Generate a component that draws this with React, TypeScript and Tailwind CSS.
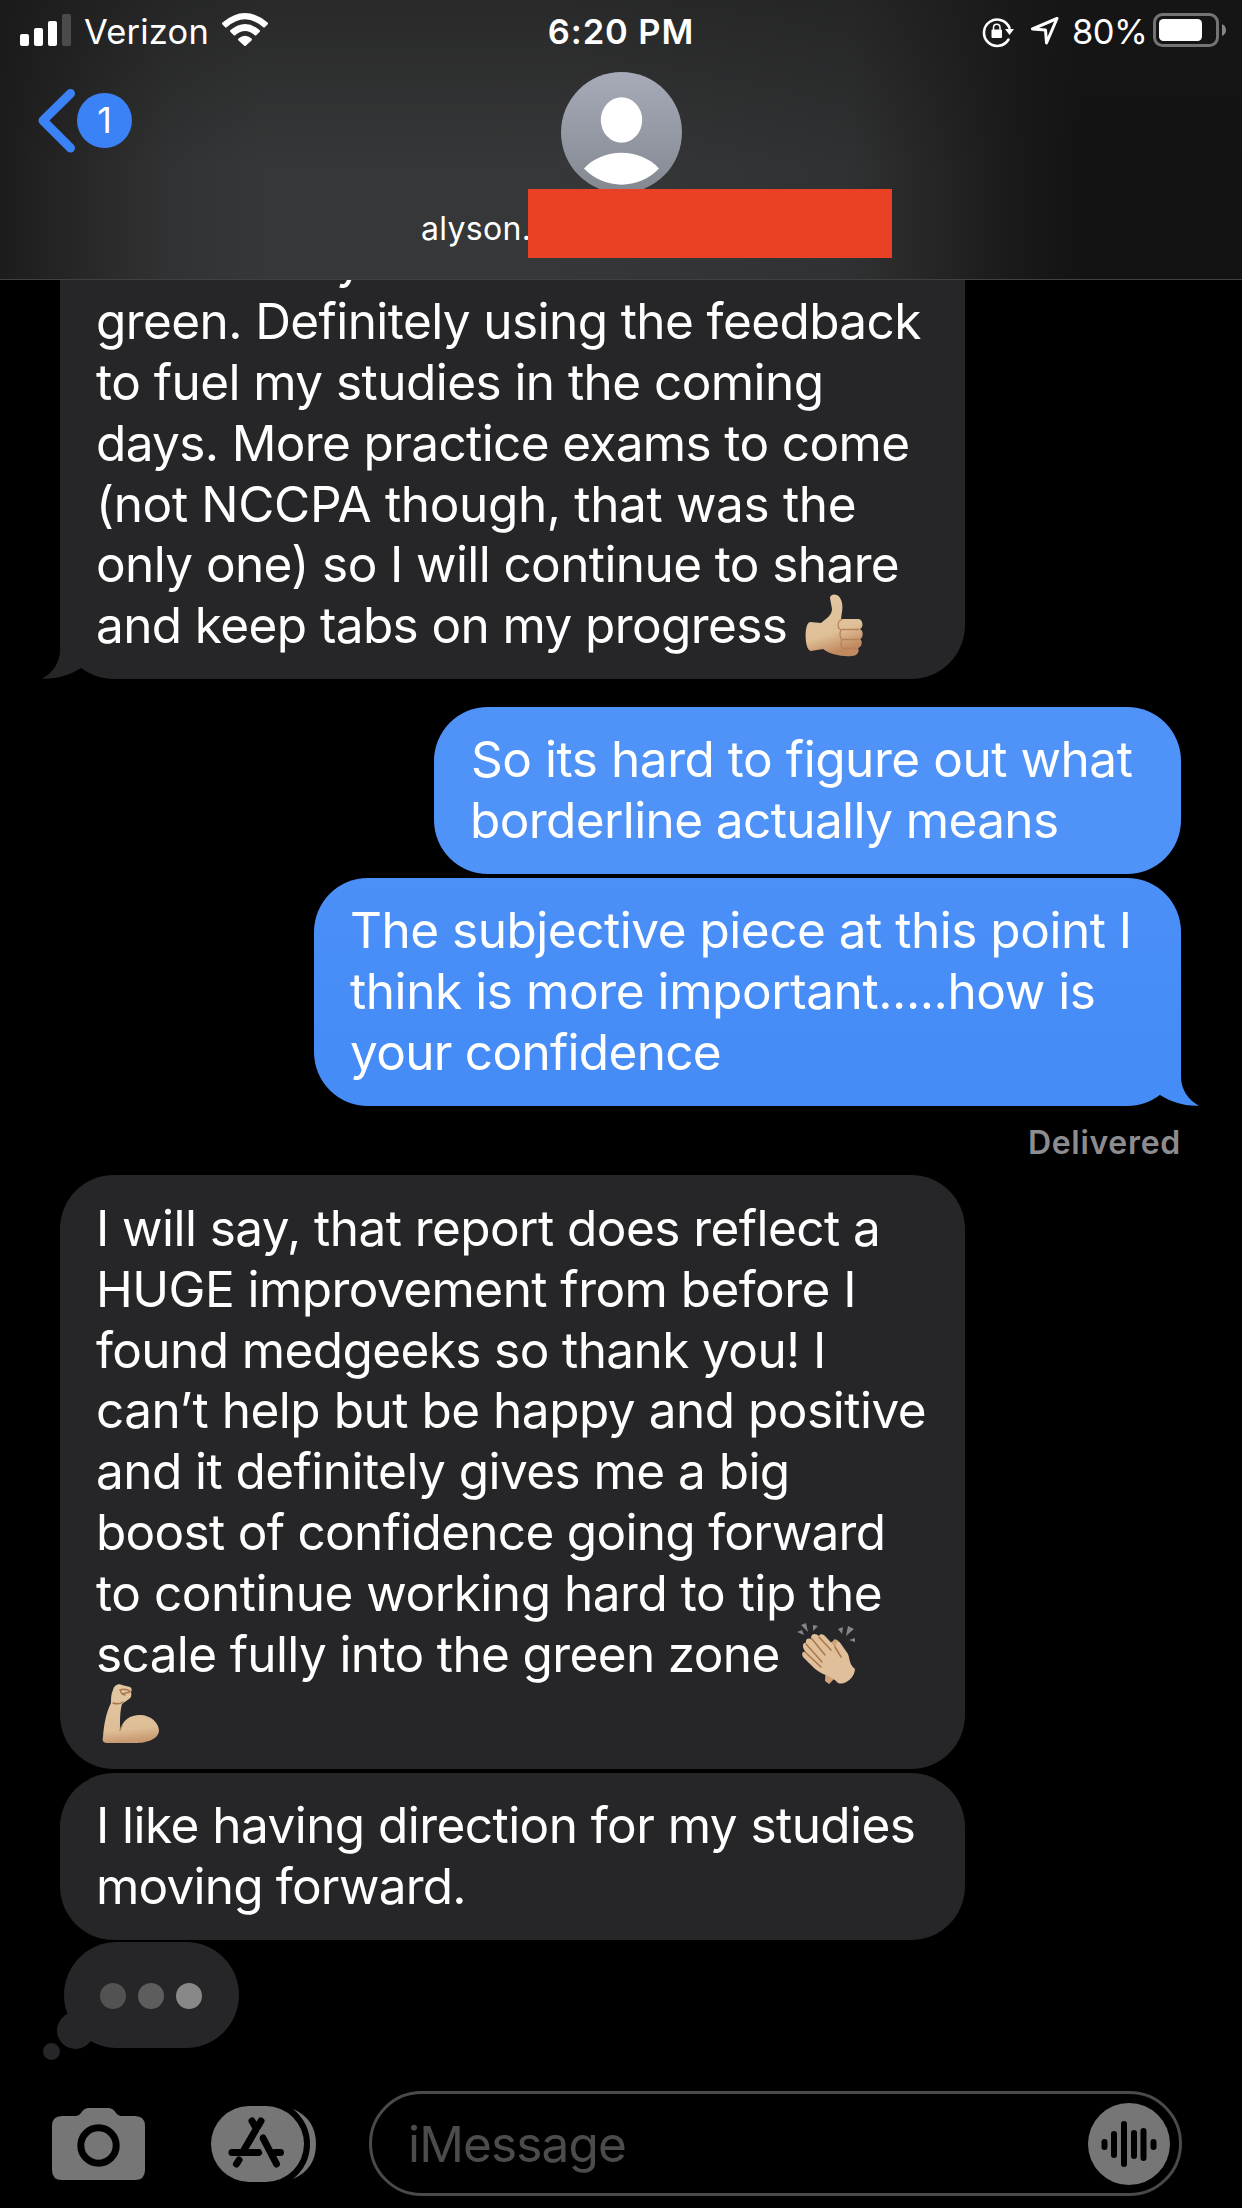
import { clsx } from 'clsx';
import type { ReactNode } from 'react';

interface BubbleProps {
  lines: ReactNode[];
  sent?: boolean;
  tail?: boolean;
  className?: string;
}

function Tail({ sent }: { sent?: boolean }) {
  return (
    <svg
      viewBox="0 0 60 60"
      className={clsx(
        'absolute bottom-0 h-[60px] w-[60px]',
        sent ? '-right-[18px] -scale-x-100 fill-[#468cf7]' : '-left-[18px] fill-[#262628]'
      )}
    >
      <path d="M18 0V31C18 43 11 54 0 59.7C14 60.5 28 56 39 49L60 20V0Z" />
    </svg>
  );
}

function Bubble({ lines, sent, tail, className }: BubbleProps) {
  return (
    <div
      className={clsx(
        'relative shrink-0 rounded-[54px] pt-[22.7px] pb-[22.7px] pl-9 text-[49.5px] leading-[60.9px] tracking-[-0.55px] whitespace-nowrap text-white',
        sent ? 'self-end' : 'w-[905px] self-start bg-[#262628]',
        className
      )}
    >
      {tail && <Tail sent={sent} />}
      {lines.map((line, i) => (
        <div key={i} className="relative h-[60.9px]">
          {line}
        </div>
      ))}
    </div>
  );
}

function ThumbsUp() {
  return (
    <svg viewBox="0 0 60 64" className="-my-2 ml-[18px] inline-block h-16 w-[60px] align-[-7px]">
      <defs>
        <linearGradient id="thumb" x1="0" y1="0" x2="0.3" y2="1">
          <stop offset="0" stopColor="#e3c9a2" />
          <stop offset="0.7" stopColor="#dfbf97" />
          <stop offset="1" stopColor="#c08a60" />
        </linearGradient>
      </defs>
      <path
        fill="url(#thumb)"
        d="M25 4C25 0 32-1 35 4C39 10 37 17 36 25L53 25C58 25 59 33 55 35C59 37 58 44 55 45C58 47 57 53 53 54C55 58 52 62 47 62C37 63 24 60 18 55L6 57C-1 56-1 29 5 28L16 29C22 24 27 21 27 15Z"
      />
      <path
        fill="none"
        stroke="#b98259"
        strokeWidth="1.3"
        strokeLinecap="round"
        d="M37 25.5C32 27 32 34 36 36C34 39 35 44 37 46C35 49 36 53 38 55M37 35.5H54M37 45.5H54M38 54.5H51"
      />
    </svg>
  );
}

function Clap() {
  return (
    <svg viewBox="0 0 60 62" className="-my-2 ml-[17px] inline-block h-[62px] w-[60px] align-[-4.5px]">
      <path
        fill="#858588"
        d="M4 2L9 0L11 9ZM0 9L5 7L7 12ZM16 2L21 3L16 8ZM41 6L46 4L45 11ZM49 13L51 3L57 6ZM52 17L58 15V19Z"
      />
      <path fill="#cfa27a" d="M30 22L36 18C38 14 42 18 44 22L51 33L52 41L39 54L32 61L28 58Z" />
      <path
        fill="#dfc09a"
        d="M9 20C8 15 13 14 17 18L14 15C14 10 19 10 22 13C23 10 27 11 29 14L39 25C38 20 41 16 44 21L51 31C53 36 52 41 58 46C58 54 48 63 41 60C37 56 34 54 29 52C21 50 15 43 6 34C4 30 6 28 9 29C4 24 6 19 9 20Z"
      />
      <path
        fill="none"
        stroke="#ad7850"
        strokeWidth="1.6"
        strokeLinecap="round"
        d="M9 21L25 39M8 29L24 44M15 16L28 32M22 14L34 27M38 24L44 34"
      />
    </svg>
  );
}

function Biceps() {
  return (
    <svg viewBox="0 0 58 62" className="-my-2 ml-[6px] inline-block h-[62px] w-[58px] align-[-4.5px]">
      <defs>
        <linearGradient id="arm" x1="0" y1="0" x2="0.1" y2="1">
          <stop offset="0" stopColor="#e2c8a2" />
          <stop offset="0.8" stopColor="#debe97" />
          <stop offset="1" stopColor="#c99b72" />
        </linearGradient>
      </defs>
      <path
        fill="url(#arm)"
        d="M11 7C12 2 17 0 20 2L28 4C30 5 30 8 29 9C30 12 29 15 27 16L20 21C18 28 18 36 18 47C21 37 28 32 38 32C49 32 57 40 57 48C56 57 43 60 34 60L5 60C1 60 0 57 1 54C2 41 4 30 9 20C9 15 9 11 11 7Z"
      />
      <path
        fill="none"
        stroke="#a87750"
        strokeWidth="1.4"
        strokeLinecap="round"
        d="M18 7Q23 5 28 8M18 7L20 11L28 9M20 11L23 12M11 20Q17 22 21 19M18 47Q19 44 20 43"
      />
    </svg>
  );
}

function StatusBar() {
  return (
    <div className="grid h-[60px] grid-cols-[529px_184px_529px] text-[34.5px] leading-[60px] text-white">
      <div className="flex pl-5">
        <svg viewBox="0 0 51 60" className="h-[60px] w-[51px] fill-white">
          <rect x="0" y="34" width="9" height="12" rx="2" />
          <rect x="14" y="28" width="9" height="18" rx="2" />
          <rect x="28" y="21" width="9" height="25" rx="2" />
          <rect x="42" y="14" width="9" height="32" rx="2" fill="#4b4b4b" />
        </svg>
        <span className="ml-[13px] w-[138px] pt-0.5 tracking-[0.2px]">Verizon</span>
        <svg viewBox="0 0 46 60" className="h-[60px] w-[46px] fill-white">
          <path d="M0.5 22.5Q-0.5 23.5 0.5 24.5L3 27Q4 28 5 27Q23 11.5 41 27Q42 28 43 27L45.5 24.5Q46.5 23.5 45.5 22.5Q23 3.5 0.5 22.5Z" />
          <path d="M8.5 30Q7.5 31 8.5 32L11.5 35Q12.5 36 13.5 35Q23 27 32.5 35Q33.5 36 34.5 35L37.5 32Q38.5 31 37.5 30Q23 18 8.5 30Z" />
          <path d="M16.5 38.5Q15.5 39.5 16.5 40.5L22 45.5Q23 46.5 24 45.5L29.5 40.5Q30.5 39.5 29.5 38.5Q23 33 16.5 38.5Z" />
        </svg>
      </div>
      <div className="pt-0.5 text-center font-semibold tracking-[0.9px]">6:20 PM</div>
      <div className="flex justify-end pr-4">
        <svg viewBox="0 0 32 60" className="h-[60px] w-8">
          <path
            d="M26.5 39.5A13.2 13.2 0 1 1 27.5 28"
            fill="none"
            stroke="#fff"
            strokeWidth="2.6"
            strokeLinecap="round"
          />
          <path d="M23 29H32L27.5 35Z" fill="#fff" />
          <rect x="9.5" y="29.5" width="10.5" height="8.5" rx="1" fill="#fff" />
          <path d="M11.5 30V27.5A3.2 3.2 0 0 1 18 27.5V30" fill="none" stroke="#fff" strokeWidth="1.5" />
        </svg>
        <svg viewBox="0 0 28 60" className="ml-[17px] h-[60px] w-7">
          <path
            d="M26 18.5L1.5 29L14.5 30L15.5 43Z"
            fill="none"
            stroke="#fff"
            strokeWidth="3"
            strokeLinejoin="round"
          />
        </svg>
        <span className="ml-[13px] w-[81px] pt-0.5 tracking-[-0.5px]">80%</span>
        <svg viewBox="0 0 73 60" className="h-[60px] w-[73px]">
          <rect x="1.5" y="14.5" width="63" height="31" rx="8" fill="none" stroke="#747474" strokeWidth="3" />
          <rect x="6" y="19" width="43" height="22" rx="4.5" fill="#fff" />
          <path d="M69 24Q73 26 73 30T69 36Z" fill="#858585" />
        </svg>
      </div>
    </div>
  );
}

function Header() {
  return (
    <header className="z-10 h-[280px] shrink-0 border-b border-[#414143] bg-[linear-gradient(to_bottom,rgba(24,24,24,0.45),rgba(24,24,24,0)_60%),linear-gradient(to_right,#1c1c1c,#232323_50px,#2b2b2b_110px,#313233_170px,#363738_260px,#363738_560px,#303132_850px,#252525_935px,#1a1a1a_1010px,#131313_1080px)]">
      <StatusBar />
      <div className="grid h-[129px] grid-cols-3 text-white">
        <div className="flex pt-[29px] pl-[38px]">
          <svg viewBox="0 0 38 64" className="h-16 w-[38px]">
            <path
              d="M32.5 4.5L5 31.5L32.5 59"
              fill="none"
              stroke="#3b82f7"
              strokeWidth="9"
              strokeLinecap="round"
              strokeLinejoin="round"
            />
          </svg>
          <div className="mt-1 ml-px h-[55px] w-[55px] rounded-full bg-[#3b82f7] text-center text-[36px] leading-[55px]">
            1
          </div>
        </div>
        <div className="flex justify-center pt-3">
          <svg viewBox="0 0 121 121" className="h-[121px] w-[121px]">
            <defs>
              <linearGradient id="avatar" x1="0" y1="0" x2="0" y2="1">
                <stop offset="0" stopColor="#a7abb9" />
                <stop offset="1" stopColor="#848890" />
              </linearGradient>
            </defs>
            <circle cx="60.5" cy="60.5" r="60.5" fill="url(#avatar)" />
            <ellipse cx="60.5" cy="48" rx="20.7" ry="22.7" fill="#fff" />
            <path d="M23 96.5C42 75.5 79 75.5 98 96.5C78 118 43 118 23 96.5Z" fill="#fff" />
          </svg>
        </div>
      </div>
      <div className="relative flex pl-[421px] text-white">
        <span className="w-[107px] pt-[18px] text-[32px] leading-[44px] tracking-[0.3px]">alyson.</span>
        <span className="h-[68.5px] w-[363.5px] bg-[#ea4026]" />
      </div>
    </header>
  );
}

function TypingIndicator() {
  return (
    <div className="relative mt-[2.4px] ml-1 flex h-[106px] w-[175px] shrink-0 items-center gap-3 self-start rounded-[53px] bg-[#262628] pt-0.5 pl-9">
      <span className="absolute -bottom-px -left-[7px] h-[37px] w-[37px] rounded-full bg-[#262628]" />
      <span className="absolute -bottom-3 -left-[21px] h-[17px] w-[17px] rounded-full bg-[#262628]" />
      <span className="h-[26px] w-[26px] rounded-full bg-[#525253]" />
      <span className="h-[26px] w-[26px] rounded-full bg-[#5d5d5e]" />
      <span className="h-[26px] w-[26px] rounded-full bg-[#888888]" />
    </div>
  );
}

function InputBar() {
  return (
    <footer className="flex h-[128px] shrink-0 pl-[52px]">
      <svg viewBox="0 0 93 128" className="h-[128px] w-[93px]">
        <path
          d="M10 36H24Q27 36 29 33Q32 28 37 28H56Q61 28 64 33Q66 36 69 36H83Q93 36 93 46V90Q93 100 83 100H10Q0 100 0 90V46Q0 36 10 36Z"
          fill="#767676"
        />
        <circle cx="46.5" cy="65.5" r="17.7" fill="none" stroke="#000" strokeWidth="7" />
      </svg>
      <svg viewBox="0 0 105 128" className="ml-[66px] h-[128px] w-[105px]">
        <path d="M82 29Q105 39 105 64T82 99Q99 85 99 64T82 29Z" fill="#767676" />
        <rect x="0" y="26" width="93" height="76" rx="38" fill="#767676" />
        <g fill="none" stroke="#000" strokeWidth="7" strokeLinecap="round">
          <path d="M50 41L33 70M41 41L45 48M21 72.5H48M64 72.5H69.5M52 58L65.5 84M28 80L25.5 84" />
        </g>
        <path d="M50 75L54.5 79" stroke="#767676" strokeWidth="2.5" />
        <path d="M49.5 50L47 60L53 74" fill="none" stroke="#767676" strokeWidth="2" />
      </svg>
      <div className="mt-[11px] ml-[53px] flex h-[105px] w-[813px] items-center justify-between rounded-full border-[3px] border-[#4a4a4b] pr-[9px] pl-9">
        <span className="pt-0.5 text-[49.5px] tracking-[-0.85px] text-[#4c4c4e]">iMessage</span>
        <svg viewBox="0 0 82 82" className="h-[82px] w-[82px]">
          <circle cx="41" cy="41" r="41" fill="#767676" />
          <path
            d="M16.5 39V44M26 31V52M36 21V61M46 30V53M55.5 28V55M65.5 39V44"
            stroke="#000"
            strokeWidth="6"
            strokeLinecap="round"
          />
        </svg>
      </div>
    </footer>
  );
}

export default function App() {
  return (
    <div className="flex h-[2208px] w-[1242px] flex-col overflow-hidden bg-black font-['Inter',sans-serif]">
      <Header />
      <main className="flex h-[1800px] shrink-0 flex-col overflow-hidden pr-[61px] pl-[60px]">
        <Bubble
          tail
          className="-mt-[72.7px]"
          lines={[
            <span className="pl-[240px]">y</span>,
            <span className="tracking-[-0.59px]">green. Definitely using the feedback</span>,
            'to fuel my studies in the coming',
            <span className="tracking-[-0.63px]">days. More practice exams to come</span>,
            <span className="tracking-[-0.35px]">(not NCCPA though, that was the</span>,
            <span className="tracking-[-0.6px]">only one) so I will continue to share</span>,
            <span className="tracking-[-0.6px]">
              and keep tabs on my progress
              <ThumbsUp />
            </span>,
          ]}
        />
        <Bubble
          sent
          className="mt-[27.6px] w-[747px] bg-[#4f93f8]"
          lines={[
            <span className="pl-px tracking-[-0.45px]">So its hard to figure out what</span>,
            <span className="tracking-[-0.6px]">borderline actually means</span>,
          ]}
        />
        <Bubble
          sent
          tail
          className="mt-1 w-[867px] bg-linear-to-b from-[#4b90f7] to-[#468cf7] to-70%"
          lines={[
            <span className="tracking-[-0.48px]">The subjective piece at this point I</span>,
            <span className="tracking-[-0.42px]">think is more important.....how is</span>,
            <span className="tracking-[-0.7px]">your confidence</span>,
          ]}
        />
        <div className="h-[69.4px] shrink-0 pt-[17px] text-right text-[32px] leading-[40px] font-semibold tracking-[0.7px] text-[#8c8c91]">
          Delivered
        </div>
        <Bubble
          lines={[
            'I will say, that report does reflect a',
            'HUGE improvement from before I',
            <span className="tracking-[-0.6px]">found medgeeks so thank you! I</span>,
            <span className="tracking-[-0.48px]">can’t help but be happy and positive</span>,
            'and it definitely gives me a big',
            <span className="tracking-[-0.7px]">boost of confidence going forward</span>,
            <span className="tracking-[-0.47px]">to continue working hard to tip the</span>,
            <span className="tracking-[-0.63px]">
              scale fully into the green zone
              <Clap />
            </span>,
            <Biceps />,
          ]}
        />
        <Bubble
          className="mt-1"
          lines={[
            'I like having direction for my studies',
            <span className="tracking-[-0.8px]">moving forward.</span>,
          ]}
        />
        <TypingIndicator />
      </main>
      <InputBar />
    </div>
  );
}
